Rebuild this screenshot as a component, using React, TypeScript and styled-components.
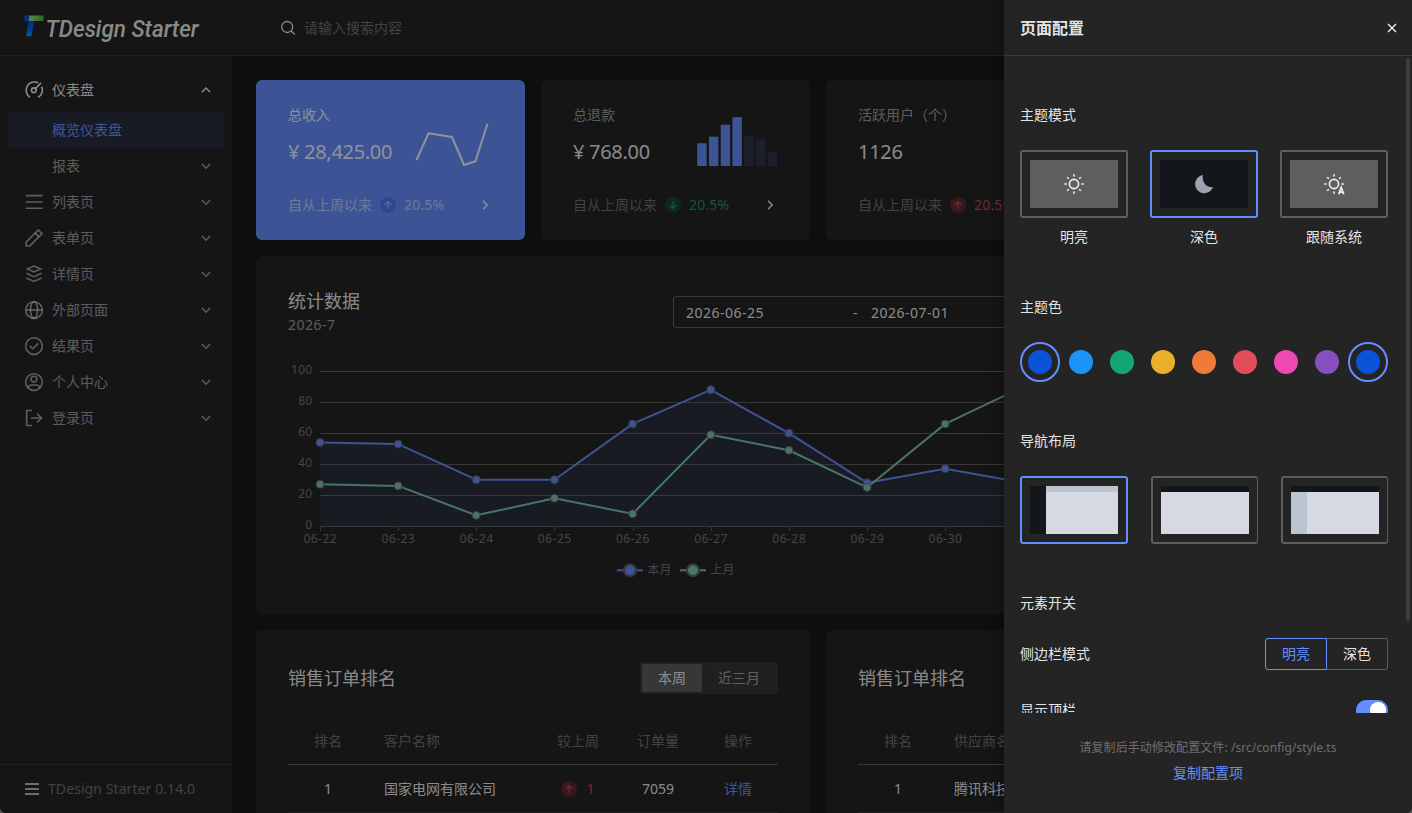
import React from "react";
import styled, { createGlobalStyle, css } from "styled-components";

const c = {
  page: "#181818",
  container: "#242424",
  stroke: "#383838",
  border: "#5e5e5e",
  primary: "rgba(255,255,255,.9)",
  secondary: "rgba(255,255,255,.55)",
  placeholder: "rgba(255,255,255,.35)",
  brand: "#648eff",
  brandFill: "#658df8",
  brandLight: "#2a2e3c",
};

const Global = createGlobalStyle`
  * { box-sizing: border-box; }
  html, body { margin: 0; height: 100%; background: #50555a; }
  body { font: 14px/22px "Noto Sans", "Noto Sans CJK SC", sans-serif; color: ${c.primary}; overflow: hidden; }
  svg { display: block; flex: none; }
`;

const Shell = styled.div`
  position: relative;
  display: flex;
  flex-direction: column;
  width: 1412px;
  height: 813px;
  overflow: hidden;
  border-radius: 0 0 6px 6px;
  background: ${c.page};
`;
const Header = styled.header`
  display: flex;
  align-items: center;
  flex: none;
  height: 56px;
  background: ${c.container};
  border-bottom: 1px solid ${c.stroke};
`;
const LogoBox = styled.div`
  width: 256px;
  padding-left: 24px;
`;
const Search = styled.div`
  display: flex;
  align-items: center;
  gap: 8px;
  padding-left: 24px;
  color: ${c.placeholder};
`;
const Body = styled.div`
  display: flex;
  flex: 1;
  min-height: 0;
`;
const Sidebar = styled.aside`
  display: flex;
  flex-direction: column;
  flex: none;
  width: 232px;
  background: ${c.container};
`;
const Menu = styled.nav`
  display: flex;
  flex-direction: column;
  flex: 1;
  padding: 16px 8px;
`;
const MenuItem = styled.div<{ $kind?: "open" | "active" }>`
  display: flex;
  align-items: center;
  height: 36px;
  padding: 0 10px 0 16px;
  border-radius: 3px;
  color: ${(p) => (p.$kind === "open" ? c.primary : p.$kind === "active" ? c.brand : c.secondary)};
  background: ${(p) => (p.$kind === "active" ? c.brandLight : "transparent")};
  margin-bottom: ${(p) => (p.$kind === "open" ? "4px" : "0")};
`;
const MenuIcon = styled.span`
  width: 28px;
  flex: none;
`;
const MenuLabel = styled.span`
  flex: 1;
`;
const SideFooter = styled.div`
  display: flex;
  align-items: center;
  gap: 8px;
  height: 49px;
  padding-left: 24px;
  border-top: 1px solid ${c.stroke};
  color: ${c.placeholder};
  letter-spacing: 0.08px;
`;
const Main = styled.main`
  flex: 1;
  min-width: 0;
  padding: 24px 32px 0 24px;
  overflow: hidden;
`;
const Grid = styled.div`
  display: grid;
  grid-template-columns: repeat(4, 269px);
  grid-template-rows: 160px 358px 240px;
  gap: 16px;
`;
const Card = styled.section<{ $span?: number; $brand?: boolean }>`
  grid-column: span ${(p) => p.$span ?? 1};
  padding: 32px;
  border-radius: 6px;
  background: ${(p) => (p.$brand ? c.brandFill : c.container)};
`;
const MetricCard = styled(Card)`
  display: flex;
  flex-direction: column;
  padding: 24px 32px;
`;
const MetricTop = styled.div`
  display: flex;
  justify-content: space-between;
  height: 90px;
`;
const MetricTitle = styled.div<{ $brand?: boolean }>`
  color: ${(p) => (p.$brand ? c.primary : c.secondary)};
`;
const MetricValue = styled.div`
  margin-top: 12px;
  font-size: 20px;
  line-height: 28px;
  white-space: nowrap;
  letter-spacing: -0.3px;
`;
const MetricBottom = styled.div<{ $brand?: boolean }>`
  display: flex;
  align-items: center;
  color: ${(p) => (p.$brand ? c.secondary : c.placeholder)};
`;
const trendColors = {
  up: ["#5a2a30", "#c3404e"],
  down: ["#1c4233", "#1f8f65"],
  brand: ["#467af2", "#9aaae0"],
};
type TrendKind = keyof typeof trendColors;
const Trend = styled.span<{ $kind: TrendKind; $flush?: boolean }>`
  display: flex;
  align-items: center;
  gap: ${(p) => (p.$flush ? 9 : 8)}px;
  margin-left: ${(p) => (p.$flush ? 0 : 8)}px;
  white-space: nowrap;
  letter-spacing: 0.2px;
  color: ${(p) => (p.$kind === "brand" ? c.secondary : trendColors[p.$kind][1])};
`;
const Chevron = styled.span<{ $color?: string }>`
  margin-left: auto;
  color: ${(p) => p.$color ?? "inherit"};
`;
const CardHead = styled.div`
  display: flex;
  justify-content: space-between;
`;
const CardTitle = styled.h2<{ $tall?: boolean }>`
  margin: 0;
  font-weight: 400;
  font-size: 18px;
  line-height: ${(p) => (p.$tall ? 32 : 26)}px;
`;
const CardSub = styled.div`
  color: ${c.secondary};
  line-height: 21px;
  letter-spacing: 0.5px;
`;
const DateRange = styled.div`
  display: flex;
  align-items: center;
  width: 390px;
  height: 32px;
  margin-top: 8px;
  padding: 1px 0 0 12px;
  border: 1px solid ${c.border};
  border-radius: 3px;
  letter-spacing: 0.5px;
`;
const DateField = styled.span<{ $w: number }>`
  width: ${(p) => p.$w}px;
`;
const ChartCard = styled(Card)`
  padding-bottom: 0;
`;
const ChartArea = styled.div`
  margin-top: 11px;
`;
const Segmented = styled.div`
  display: flex;
  height: 32px;
  padding: 2px;
  border-radius: 3px;
  background: #363636;
`;
const Segment = styled.span<{ $on?: boolean }>`
  padding: 0 16px;
  line-height: 28px;
  border-radius: 2px;
  color: ${(p) => (p.$on ? c.primary : c.secondary)};
  background: ${(p) => (p.$on ? "#5c5c5c" : "transparent")};
`;
const RankCard = styled(Card)`
  overflow: hidden;
`;
const Table = styled.div`
  margin-top: 23px;
`;
const Row = styled.div<{ $head?: boolean }>`
  display: grid;
  grid-template-columns: 80px 1fr 80px 80px 80px;
  align-items: center;
  height: 48px;
  color: ${(p) => (p.$head ? c.placeholder : c.primary)};
  border-bottom: 1px solid ${(p) => (p.$head ? c.border : c.stroke)};
`;
const Cell = styled.span<{ $left?: boolean; $link?: boolean }>`
  display: flex;
  justify-content: ${(p) => (p.$left ? "flex-start" : "center")};
  padding-left: ${(p) => (p.$left ? "16px" : "0")};
  white-space: nowrap;
  ${(p) => p.$link && css`color: ${c.brand};`}
`;

const Mask = styled.div`
  position: absolute;
  inset: 0;
  background: rgba(0, 0, 0, 0.4);
`;
const Drawer = styled.aside`
  position: absolute;
  top: 0;
  right: 0;
  bottom: 0;
  width: 408px;
  display: flex;
  flex-direction: column;
  background: ${c.container};
  box-shadow: 0 0 12px rgba(0, 0, 0, 0.36);
`;
const DrawerHead = styled.div`
  display: flex;
  align-items: center;
  justify-content: space-between;
  flex: none;
  height: 56px;
  padding: 0 14px 0 16px;
  border-bottom: 1px solid #3a3a3a;
  font-size: 16px;
  font-weight: 700;
`;
const DrawerBody = styled.div`
  position: relative;
  flex: 1;
  min-height: 0;
  padding: 0 24px 0 16px;
  overflow: hidden;
`;
const ScrollThumb = styled.i`
  position: absolute;
  top: 2px;
  right: 2px;
  width: 4px;
  height: 563px;
  border-radius: 2px;
  background: #3c3c3c;
`;
const GroupTitle = styled.div`
  padding-top: 48px;
  margin-bottom: 24px;
`;
const Options = styled.div`
  display: flex;
  justify-content: space-between;
`;
const ThemeOption = styled.div`
  display: flex;
  flex-direction: column;
  align-items: center;
  gap: 8px;
`;
const Frame = styled.div<{ $on?: boolean; $narrow?: boolean }>`
  width: ${(p) => (p.$narrow ? 107 : 108)}px;
  height: 68px;
  padding: 8px;
  border: 2px solid ${(p) => (p.$on ? c.brand : c.border)};
  border-right-width: ${(p) => (p.$narrow ? 1 : 2)}px;
  border-radius: 3px;
`;
const ThemePreview = styled.div<{ $dark?: boolean }>`
  display: flex;
  align-items: center;
  justify-content: center;
  height: 48px;
  background: ${(p) => (p.$dark ? "#13161b" : "#5e5e5e")};
`;
const Swatch = styled.div<{ $color: string; $on?: boolean }>`
  display: flex;
  width: 40px;
  height: 40px;
  padding: 6px;
  border: 2px solid ${(p) => (p.$on ? c.brand : "transparent")};
  border-radius: 50%;
  &::after {
    content: "";
    flex: 1;
    border-radius: 50%;
    background: ${(p) => p.$color};
  }
`;
const LayoutPreview = styled.div<{ $mode: "side" | "top" | "mix" }>`
  display: grid;
  height: 48px;
  grid-template-columns: ${(p) => (p.$mode === "top" ? "0 1fr" : "16px 1fr")};
  grid-template-rows: 6px 1fr;
  grid-template-areas: ${(p) => (p.$mode === "side" ? '"side head" "side body"' : '"head head" "side body"')};
`;
const Part = styled.i<{ $area: string; $color: string }>`
  grid-area: ${(p) => p.$area};
  background: ${(p) => p.$color};
`;
const Setting = styled.div`
  display: flex;
  align-items: center;
  justify-content: space-between;
  height: 32px;
  margin-bottom: 24px;
`;
const RadioGroup = styled.div`
  display: flex;
`;
const RadioButton = styled.span<{ $on?: boolean }>`
  width: 62px;
  height: 32px;
  line-height: 30px;
  text-align: center;
  border: 1px solid ${(p) => (p.$on ? c.brand : c.border)};
  color: ${(p) => (p.$on ? c.brand : c.primary)};
  border-radius: ${(p) => (p.$on ? "3px 0 0 3px" : "0 3px 3px 0")};
  ${(p) => !p.$on && css`width: 61px; border-left: 0;`}
`;
const Switch = styled.span`
  display: flex;
  justify-content: flex-end;
  width: 32px;
  height: 20px;
  padding: 2px;
  border-radius: 10px;
  background: ${c.brand};
  &::after {
    content: "";
    width: 16px;
    border-radius: 50%;
    background: #fff;
  }
`;
const DrawerFoot = styled.div`
  display: flex;
  flex-direction: column;
  align-items: center;
  flex: none;
  height: 100px;
  padding-top: 24px;
`;
const FootNote = styled.div`
  font-size: 12px;
  line-height: 22px;
  letter-spacing: 0.08px;
  color: ${c.placeholder};
  white-space: nowrap;
`;
const FootLink = styled.a`
  line-height: 28px;
  color: ${c.brand};
`;

const Icon = ({ children }: { children: React.ReactNode }) => (
  <svg width="20" height="20" viewBox="0 0 24 24" fill="none" stroke="currentColor" strokeWidth="1.9">
    {children}
  </svg>
);

const icons: Record<string, React.ReactNode> = {
  dashboard: (
    <>
      <path d="M17 3.4A10 10 0 0 0 7.2 20.8" />
      <path d="M21.2 8A10 10 0 0 1 16.8 20.8" />
      <circle cx="11.8" cy="12.2" r="2.8" />
      <path d="M13.8 10.2L20.4 3.4" />
    </>
  ),
  list: <path d="M2 4.3h20.3M2 12h20.3M2 19.5h20.3" />,
  edit: (
    <>
      <path d="M2.5 21.5v-4.600L17.2 2.300l4.500 4.500L7 21.500z" />
      <path d="M13.400 6.100l4.500 4.500" />
    </>
  ),
  layers: (
    <>
      <path d="M12 2.500l8 3.500-8 3.500L4 6z" />
      <path d="M2.800 11.200L12 15.300l9.200-4.100M2.800 16.900L12 21l9.200-4.100" />
    </>
  ),
  globe: (
    <>
      <circle cx="12" cy="12" r="10" />
      <ellipse cx="12" cy="12" rx="4.300" ry="10" />
      <path d="M2 12h20" />
    </>
  ),
  check: (
    <>
      <circle cx="12" cy="12" r="10" />
      <path d="M7 11.800l3.500 3.500 6.500-6.500" />
    </>
  ),
  user: (
    <>
      <circle cx="12" cy="12" r="10" />
      <circle cx="12" cy="8.600" r="3.500" />
      <path d="M5 19c.4-2.600 1.800-3.500 4-3.500h6c2.200 0 3.600.9 4 3.500" />
    </>
  ),
  logout: <path d="M9.500 3H3.200v18h6.300M8.500 12h12.300M15.800 6.800L21 12l-5.200 5.200" />,
};

const chevrons = {
  down: "M3.800 6l4.200 4.200L12.200 6",
  up: "M3.800 10.200L8 6l4.200 4.200",
  right: "M6 3.800L10.200 8 6 12.200",
};
const ChevronIcon = ({ dir }: { dir: keyof typeof chevrons }) => (
  <svg width="16" height="16" viewBox="0 0 16 16" fill="none" stroke="currentColor" strokeWidth="1.400">
    <path d={chevrons[dir]} />
  </svg>
);

const Logo = () => (
  <svg width="190" height="32" viewBox="0 0 190 32">
    <defs>
      <linearGradient id="bar">
        <stop offset="0" stopColor="#a4d79c" />
        <stop offset="1" stopColor="#37b51c" />
      </linearGradient>
      <linearGradient id="stem" x1="0" y1="0" x2="0" y2="1">
        <stop offset="0" stopColor="#0b4ed0" />
        <stop offset=".6" stopColor="#0a5ff0" />
        <stop offset="1" stopColor="#0f9cd8" />
      </linearGradient>
    </defs>
    <path d="M.6 3.500h5v5.500H0z" fill="#0a4fe0" />
    <path d="M5.300 3.500H20L19.300 9H4.700z" fill="url(#bar)" />
    <path d="M4.500 9H10.300L7.500 24.200H2z" fill="url(#stem)" />
    <text x="21.500" y="24.500" fill={c.primary} fontFamily="Roboto" fontStyle="italic" fontWeight="500" fontSize="24" textLength="153" lengthAdjust="spacingAndGlyphs">
      TDesign Starter
    </text>
  </svg>
);

const TrendBadge = ({ kind }: { kind: TrendKind }) => (
  <svg width="16" height="16" viewBox="0 0 16 16" fill="none">
    <circle cx="8" cy="8" r="8" fill={trendColors[kind][0]} />
    <path
      d={kind === "down" ? "M8 4.200v7.300M4.500 8L8 11.500 11.500 8" : "M8 11.800V4.500M4.500 8L8 4.500 11.500 8"}
      stroke={trendColors[kind][1]}
      strokeWidth="1.400"
    />
  </svg>
);

const MiniLine = () => (
  <svg width="80" height="64" viewBox="0 0 80 64">
    <path d="M3.500 56L15.500 29.300 39 33 51 61 62.500 57.300 74.500 19.500" fill="none" stroke={c.primary} strokeWidth="2" strokeLinejoin="bevel" />
  </svg>
);
const barTops = [143.300, 136.700, 124.700, 117.200, 135.700, 139.500, 152.500];
const MiniBars = () => (
  <svg width="82" height="64" viewBox="0 0 82 64">
    {barTops.map((t, i) => (
      <rect key={i} x={1.200 + i * 11.750} y={t - 104} width="9.400" height={166 - t} fill={i < 4 ? c.brandFill : "#2d3648"} />
    ))}
  </svg>
);

const days = ["06-22", "06-23", "06-24", "06-25", "06-26", "06-27", "06-28", "06-29", "06-30", "07-01"];
const green = "#7bc0b2";
const series = [
  { data: [54, 53, 30, 30, 66, 88, 60, 28, 37, 28], color: c.brandFill },
  { data: [27, 26, 7, 18, 8, 59, 49, 25, 66, 90], color: green },
];
const legend = [
  { x: 329, name: "本月", color: c.brandFill },
  { x: 392, name: "上月", color: green },
];
const px = (i: number) => 32 + i * 78.15;
const py = (v: number) => 180.2 - v * 1.55;
const line = (d: number[]) => d.map((v, i) => `${i ? "L" : "M"}${px(i)} ${py(v)}`).join("");
const axis = "#737373";

const StatChart = () => (
  <svg width="775" height="268" viewBox="0 0 775 268" fontSize="12">
    {[100, 80, 60, 40, 20, 0].map((v) => (
      <g key={v}>
        <path d={`M32 ${Math.round(py(v)) + 0.5}H735`} stroke="#5c5c5c" />
        <text x="24.5" y={Math.round(py(v)) + 3} textAnchor="end" fill={axis} letterSpacing=".3">{v}</text>
      </g>
    ))}
    <path d={`${line(series[0].data)}V180.5H32Z`} fill={c.brand} opacity=".09" />
    {days.map((d, i) => (
      <g key={d}>
        <path d={`M${Math.round(px(i)) + 0.5} 180v5`} stroke="#5c5c5c" />
        <text x={px(i) + 0.3} y="197" textAnchor="middle" fill={axis} letterSpacing=".5">{d}</text>
      </g>
    ))}
    {series.map((s) => (
      <g key={s.color}>
        <path d={line(s.data)} fill="none" stroke={s.color} strokeWidth="2" strokeLinejoin="bevel" />
        {s.data.map((v, i) => (
          <circle key={i} cx={px(i)} cy={py(v)} r="4" fill={s.color} stroke="#5c5c5c" />
        ))}
      </g>
    ))}
    {legend.map((l) => (
      <g key={l.name}>
        <path d={`M${l.x} 224.3h26`} stroke={l.color} strokeWidth="2" />
        <circle cx={l.x + 13} cy="224.3" r="6" fill={l.color} stroke="#5c5c5c" strokeWidth="2" />
        <text x={l.x + 30.5} y="228" fill={axis}>{l.name}</text>
      </g>
    ))}
  </svg>
);

interface MetricProps { title: string; value: string; kind: TrendKind; chart?: React.ReactNode }
const Metric = ({ title, value, kind, chart }: MetricProps) => {
  const brand = kind === "brand";
  return (
    <MetricCard $brand={brand}>
      <MetricTop>
        <div>
          <MetricTitle $brand={brand}>{title}</MetricTitle>
          <MetricValue>{value}</MetricValue>
        </div>
        {chart}
      </MetricTop>
      <MetricBottom $brand={brand}>
        自从上周以来
        <Trend $kind={kind}>
          <TrendBadge kind={kind} />
          20.5%
        </Trend>
        <Chevron $color={c.primary}><ChevronIcon dir="right" /></Chevron>
      </MetricBottom>
    </MetricCard>
  );
};

interface RankingProps { nameHead: string; company: string; detailed?: boolean }
const Ranking = ({ nameHead, company, detailed }: RankingProps) => (
  <RankCard $span={2}>
    <CardHead>
      <CardTitle $tall>销售订单排名</CardTitle>
      {detailed && (
        <Segmented>
          <Segment $on>本周</Segment>
          <Segment>近三月</Segment>
        </Segmented>
      )}
    </CardHead>
    <Table>
      <Row $head>
        <Cell>排名</Cell>
        <Cell $left>{nameHead}</Cell>
        {detailed && (
          <>
            <Cell>较上周</Cell>
            <Cell>订单量</Cell>
            <Cell>操作</Cell>
          </>
        )}
      </Row>
      <Row>
        <Cell>1</Cell>
        <Cell $left>{company}</Cell>
        {detailed && (
          <>
            <Cell><Trend $kind="up" $flush><TrendBadge kind="up" />1</Trend></Cell>
            <Cell>7059</Cell>
            <Cell $link>详情</Cell>
          </>
        )}
      </Row>
    </Table>
  </RankCard>
);

const menu: [string, string][] = [
  ["list", "列表页"],
  ["edit", "表单页"],
  ["layers", "详情页"],
  ["globe", "外部页面"],
  ["check", "结果页"],
  ["user", "个人中心"],
  ["logout", "登录页"],
];

const Sun = ({ auto }: { auto?: boolean }) => (
  <svg width="22" height="22" viewBox="0 0 22 22" fill="none" stroke="#f0f0f0" strokeWidth="1.600">
    <circle cx="11" cy="11" r="4.600" />
    <path d="M11 1.200v2.300M1.200 11h2.500M4.200 4.200l1.600 1.600M17.800 4.200l-1.600 1.600M4.200 17.800l1.600-1.600M11 18.500v2.300" />
    <path d={auto ? "M18.500 11h2.300" : "M18.300 11h2.500M17.800 17.800l-1.600-1.600"} />
    {auto && <path d="M15.700 21.200l2.500-6.800 2.600 6.800M16.500 19.200h3.600" strokeWidth="1.700" />}
  </svg>
);
const Moon = () => (
  <svg width="20" height="20" viewBox="0 0 20 20">
    <path d="M8.700 1a9.200 9.200 0 1 0 10.300 12.200C13 13.800 8 9.500 8.700 1z" fill="#9aa3ae" />
  </svg>
);

const swatches = ["#0a53d8", "#1a94f8", "#13a673", "#ebb02a", "#ee7c38", "#e24c5b", "#ee48b2", "#854fbd", "#0a53d8"];
const dark = "#13161b";
const mid = "#bcc4d0";
const light = "#d5dae2";

export default function App() {
  return (
    <>
      <Global />
      <Shell>
        <Header>
          <LogoBox><Logo /></LogoBox>
          <Search>
            <svg width="16" height="16" viewBox="0 0 16 16" fill="none" stroke="rgba(255,255,255,.9)" strokeWidth="1.300">
              <circle cx="7.200" cy="7" r="5.500" />
              <path d="M11.200 11l3.600 3.600" />
            </svg>
            请输入搜索内容
          </Search>
        </Header>
        <Body>
          <Sidebar>
            <Menu>
              <MenuItem $kind="open">
                <MenuIcon><Icon>{icons.dashboard}</Icon></MenuIcon>
                <MenuLabel>仪表盘</MenuLabel>
                <ChevronIcon dir="up" />
              </MenuItem>
              <MenuItem $kind="active"><MenuIcon /><MenuLabel>概览仪表盘</MenuLabel></MenuItem>
              <MenuItem><MenuIcon /><MenuLabel>报表</MenuLabel><ChevronIcon dir="down" /></MenuItem>
              {menu.map(([icon, label]) => (
                <MenuItem key={label}>
                  <MenuIcon><Icon>{icons[icon]}</Icon></MenuIcon>
                  <MenuLabel>{label}</MenuLabel>
                  <ChevronIcon dir="down" />
                </MenuItem>
              ))}
            </Menu>
            <SideFooter>
              <svg width="16" height="16" viewBox="0 0 16 16" stroke="rgba(255,255,255,.9)" strokeWidth="1.300">
                <path d="M1 3h14M1 8h14M1 13h14" />
              </svg>
              TDesign Starter 0.14.0
            </SideFooter>
          </Sidebar>
          <Main>
            <Grid>
              <Metric title="总收入" value="¥ 28,425.00" kind="brand" chart={<MiniLine />} />
              <Metric title="总退款" value="¥ 768.00" kind="down" chart={<MiniBars />} />
              <Metric title="活跃用户（个）" value="1126" kind="up" />
              <Card />
              <ChartCard $span={3}>
                <CardHead>
                  <div>
                    <CardTitle>统计数据</CardTitle>
                    <CardSub>2026-7</CardSub>
                  </div>
                  <DateRange>
                    <DateField $w={167}>2026-06-25</DateField>
                    <DateField $w={18}>-</DateField>
                    <DateField $w={167}>2026-07-01</DateField>
                  </DateRange>
                </CardHead>
                <ChartArea><StatChart /></ChartArea>
              </ChartCard>
              <Card />
              <Ranking nameHead="客户名称" company="国家电网有限公司" detailed />
              <Ranking nameHead="供应商名称" company="腾讯科技" />
            </Grid>
          </Main>
        </Body>
        <Mask />
        <Drawer>
          <DrawerHead>
            页面配置
            <svg width="12" height="12" viewBox="0 0 12 12" stroke="#f0f0f0" strokeWidth="1.400">
              <path d="M2 2l8 8M10 2l-8 8" />
            </svg>
          </DrawerHead>
          <DrawerBody>
            <GroupTitle>主题模式</GroupTitle>
            <Options>
              <ThemeOption><Frame><ThemePreview><Sun /></ThemePreview></Frame>明亮</ThemeOption>
              <ThemeOption><Frame $on><ThemePreview $dark><Moon /></ThemePreview></Frame>深色</ThemeOption>
              <ThemeOption><Frame><ThemePreview><Sun auto /></ThemePreview></Frame>跟随系统</ThemeOption>
            </Options>
            <GroupTitle>主题色</GroupTitle>
            <Options>
              {swatches.map((s, i) => <Swatch key={i} $color={s} $on={i === 0 || i === 8} />)}
            </Options>
            <GroupTitle>导航布局</GroupTitle>
            <Options>
              <Frame $on>
                <LayoutPreview $mode="side">
                  <Part $area="side" $color={dark} /><Part $area="head" $color={mid} /><Part $area="body" $color={light} />
                </LayoutPreview>
              </Frame>
              <Frame $narrow>
                <LayoutPreview $mode="top">
                  <Part $area="head" $color={dark} /><Part $area="body" $color={light} />
                </LayoutPreview>
              </Frame>
              <Frame $narrow>
                <LayoutPreview $mode="mix">
                  <Part $area="head" $color={dark} /><Part $area="side" $color={mid} /><Part $area="body" $color={light} />
                </LayoutPreview>
              </Frame>
            </Options>
            <GroupTitle>元素开关</GroupTitle>
            <Setting>
              侧边栏模式
              <RadioGroup><RadioButton $on>明亮</RadioButton><RadioButton>深色</RadioButton></RadioGroup>
            </Setting>
            <Setting>显示顶栏<Switch /></Setting>
            <ScrollThumb />
          </DrawerBody>
          <DrawerFoot>
            <FootNote>请复制后手动修改配置文件: /src/config/style.ts</FootNote>
            <FootLink>复制配置项</FootLink>
          </DrawerFoot>
        </Drawer>
      </Shell>
    </>
  );
}
